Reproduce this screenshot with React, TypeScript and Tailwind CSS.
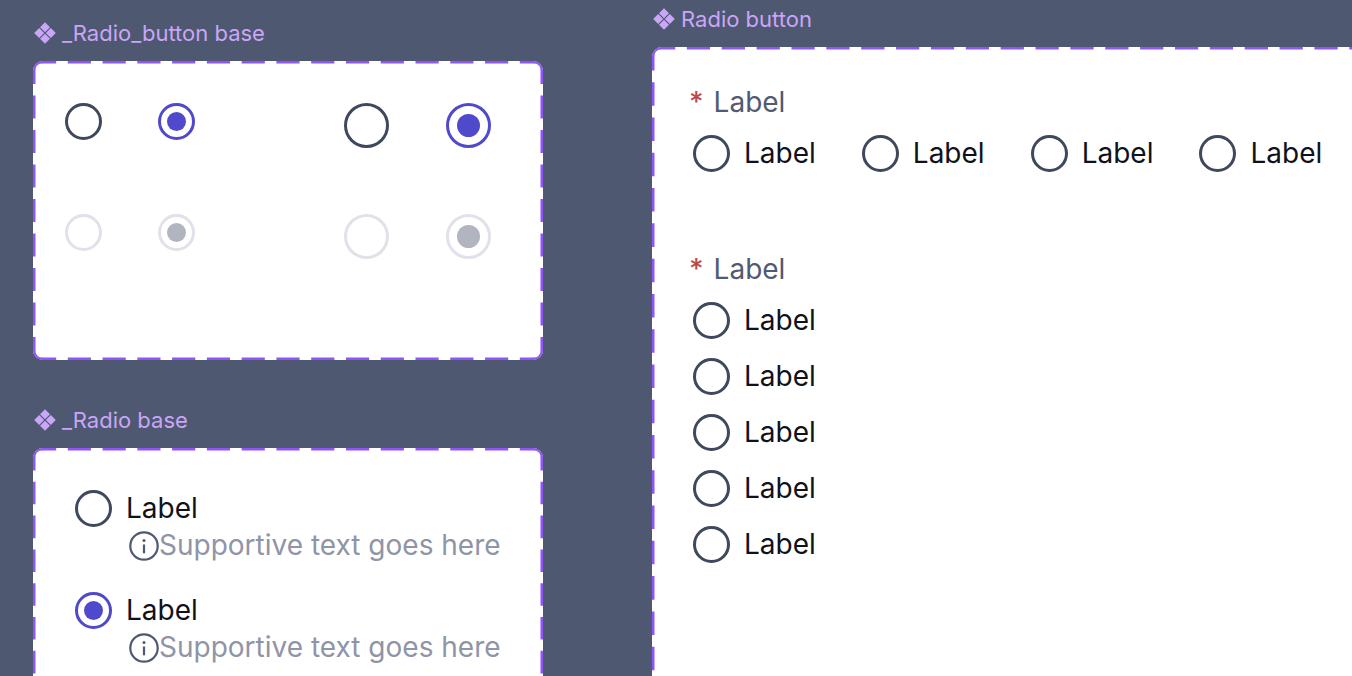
import type { ReactNode } from 'react';
import clsx from 'clsx';

const OPTIONS_ROW = ['a', 'b', 'c', 'd'];
const OPTIONS_COLUMN = ['a', 'b', 'c', 'd', 'e'];

function ComponentIcon() {
  return (
    <svg viewBox="0 0 22 22" className="size-[22px] shrink-0" fill="currentColor" aria-hidden="true">
      <path d="M11 0.2 L16 5.2 L11 10.2 L6 5.2 Z" />
      <path d="M11 11.8 L16 16.8 L11 21.8 L6 16.8 Z" />
      <path d="M5.2 6 L10.2 11 L5.2 16 L0.2 11 Z" />
      <path d="M16.8 6 L21.8 11 L16.8 16 L11.8 11 Z" />
    </svg>
  );
}

function InfoIcon() {
  return (
    <svg viewBox="0 0 30 30" className="size-[30px] shrink-0 text-[#4e5870]" fill="none" aria-hidden="true">
      <circle cx="15" cy="15" r="13.7" stroke="currentColor" strokeWidth="2.2" />
      <path d="M15 13.5 V22.3" stroke="currentColor" strokeWidth="2.2" />
      <circle cx="15" cy="9.5" r="1.5" fill="currentColor" />
    </svg>
  );
}

// Every edge starts and ends on a dash: pathLength = gaps * 3 + 2 with a "2 1" pattern.
function DashedOutline({ cols, rows }: { cols: number; rows: number }) {
  const h = cols * 3 + 2;
  const v = rows * 3 + 2;
  const corner = 'absolute size-[10px] border-[#8f55f8]';
  return (
    <div className="pointer-events-none absolute inset-0" aria-hidden="true">
      <svg className="size-full" stroke="#8f55f8" strokeWidth="5" strokeDasharray="2 1">
        <line x1="0" y1="0" x2="100%" y2="0" pathLength={h} />
        <line x1="0" y1="100%" x2="100%" y2="100%" pathLength={h} />
        <line x1="0" y1="0" x2="0" y2="100%" pathLength={v} />
        <line x1="100%" y1="0" x2="100%" y2="100%" pathLength={v} />
      </svg>
      <span className={clsx(corner, 'left-0 top-0 rounded-tl-[10px] border-l-2 border-t-2')} />
      <span className={clsx(corner, 'right-0 top-0 rounded-tr-[10px] border-r-2 border-t-2')} />
      <span className={clsx(corner, 'bottom-0 left-0 rounded-bl-[10px] border-b-2 border-l-2')} />
      <span className={clsx(corner, 'bottom-0 right-0 rounded-br-[10px] border-b-2 border-r-2')} />
    </div>
  );
}

type FrameProps = { title: string; cols: number; rows: number; className?: string; children: ReactNode };

function Frame({ title, cols, rows, className, children }: FrameProps) {
  return (
    <section>
      <h2 className="mb-3 flex items-center gap-1.5 pl-px text-[22px] leading-8 text-[#c9a6f7]">
        <ComponentIcon />
        {title}
      </h2>
      <div className={clsx('relative overflow-hidden rounded-[10px] bg-white', className)}>
        {children}
        <DashedOutline cols={cols} rows={rows} />
      </div>
    </section>
  );
}

type RadioProps = {
  name: string;
  value?: string;
  large?: boolean;
  checked?: boolean;
  disabled?: boolean;
  ariaLabel?: string;
};

function Radio({ name, value = 'on', large, checked, disabled, ariaLabel }: RadioProps) {
  return (
    <input
      type="radio"
      name={name}
      value={value}
      defaultChecked={checked}
      disabled={disabled}
      aria-label={ariaLabel}
      className={clsx(
        'grid shrink-0 appearance-none place-items-center rounded-full border-[3px] border-[#3f495d] bg-white',
        'before:rounded-full checked:border-[#4f49cb] checked:before:bg-[#4f49cb]',
        'disabled:border-[#e2e1ea] disabled:checked:before:bg-[#b0b5bf]',
        large ? 'size-[45px] before:size-[23px]' : 'size-[37px] before:size-[19px]',
      )}
    />
  );
}

function RadioOption({ name, value, checked }: { name: string; value?: string; checked?: boolean }) {
  return (
    <label className="flex items-center gap-3.5 text-[28px] leading-[37px] text-[#0f121b]">
      <Radio name={name} value={value} checked={checked} />
      Label
    </label>
  );
}

function RadioWithSupport({ name, checked }: { name: string; checked?: boolean }) {
  return (
    <div>
      <RadioOption name={name} checked={checked} />
      <p className="flex items-center whitespace-nowrap pl-[54px] text-[28px] leading-[37px] text-[#8f94a7]">
        <InfoIcon />
        Supportive text goes here
      </p>
    </div>
  );
}

function RadioGroup({ name, options, vertical }: { name: string; options: string[]; vertical?: boolean }) {
  return (
    <fieldset>
      <legend className="mb-3.5 flex gap-2.5 text-[28px] leading-[37px] text-[#505a72]">
        <span className="font-medium text-[#b94a48]">*</span>
        Label
      </legend>
      <div className={clsx('flex pl-1', vertical ? 'flex-col items-start gap-[19px]' : 'gap-[46px]')}>
        {options.map((o) => (
          <RadioOption key={o} name={name} value={o} />
        ))}
      </div>
    </fieldset>
  );
}

export default function App() {
  return (
    <main className="flex h-screen items-start gap-[109px] overflow-hidden bg-[#4e5870] pl-[33px] font-['Inter',sans-serif]">
      <div className="flex w-[510px] shrink-0 flex-col gap-11 pt-[17px]">
        <Frame title="_Radio_button base" cols={14} rows={8} className="pb-[101px] pl-8 pt-[42px]">
          <div className="grid grid-cols-[93px_186px_102px_auto] grid-rows-[111px_auto] items-start">
            <Radio name="base-sm" ariaLabel="Small" />
            <Radio name="base-sm-on" ariaLabel="Small selected" checked />
            <Radio name="base-lg" ariaLabel="Large" large />
            <Radio name="base-lg-on" ariaLabel="Large selected" large checked />
            <Radio name="base-sm-off" ariaLabel="Small disabled" disabled />
            <Radio name="base-sm-off-on" ariaLabel="Small selected disabled" checked disabled />
            <Radio name="base-lg-off" ariaLabel="Large disabled" large disabled />
            <Radio name="base-lg-off-on" ariaLabel="Large selected disabled" large checked disabled />
          </div>
        </Frame>
        <Frame title="_Radio base" cols={14} rows={8} className="pb-[75px] pl-[42px] pt-[42px]">
          <div className="flex flex-col gap-7">
            <RadioWithSupport name="support" />
            <RadioWithSupport name="support-on" checked />
          </div>
        </Frame>
      </div>
      <div className="-mr-40 min-w-0 flex-1 pt-[3px]">
        <Frame title="Radio button" cols={24} rows={20} className="pb-[213px] pl-[37px] pt-[37px]">
          <div className="flex flex-col gap-[79px]">
            <RadioGroup name="row" options={OPTIONS_ROW} />
            <RadioGroup name="column" options={OPTIONS_COLUMN} vertical />
          </div>
        </Frame>
      </div>
    </main>
  );
}
